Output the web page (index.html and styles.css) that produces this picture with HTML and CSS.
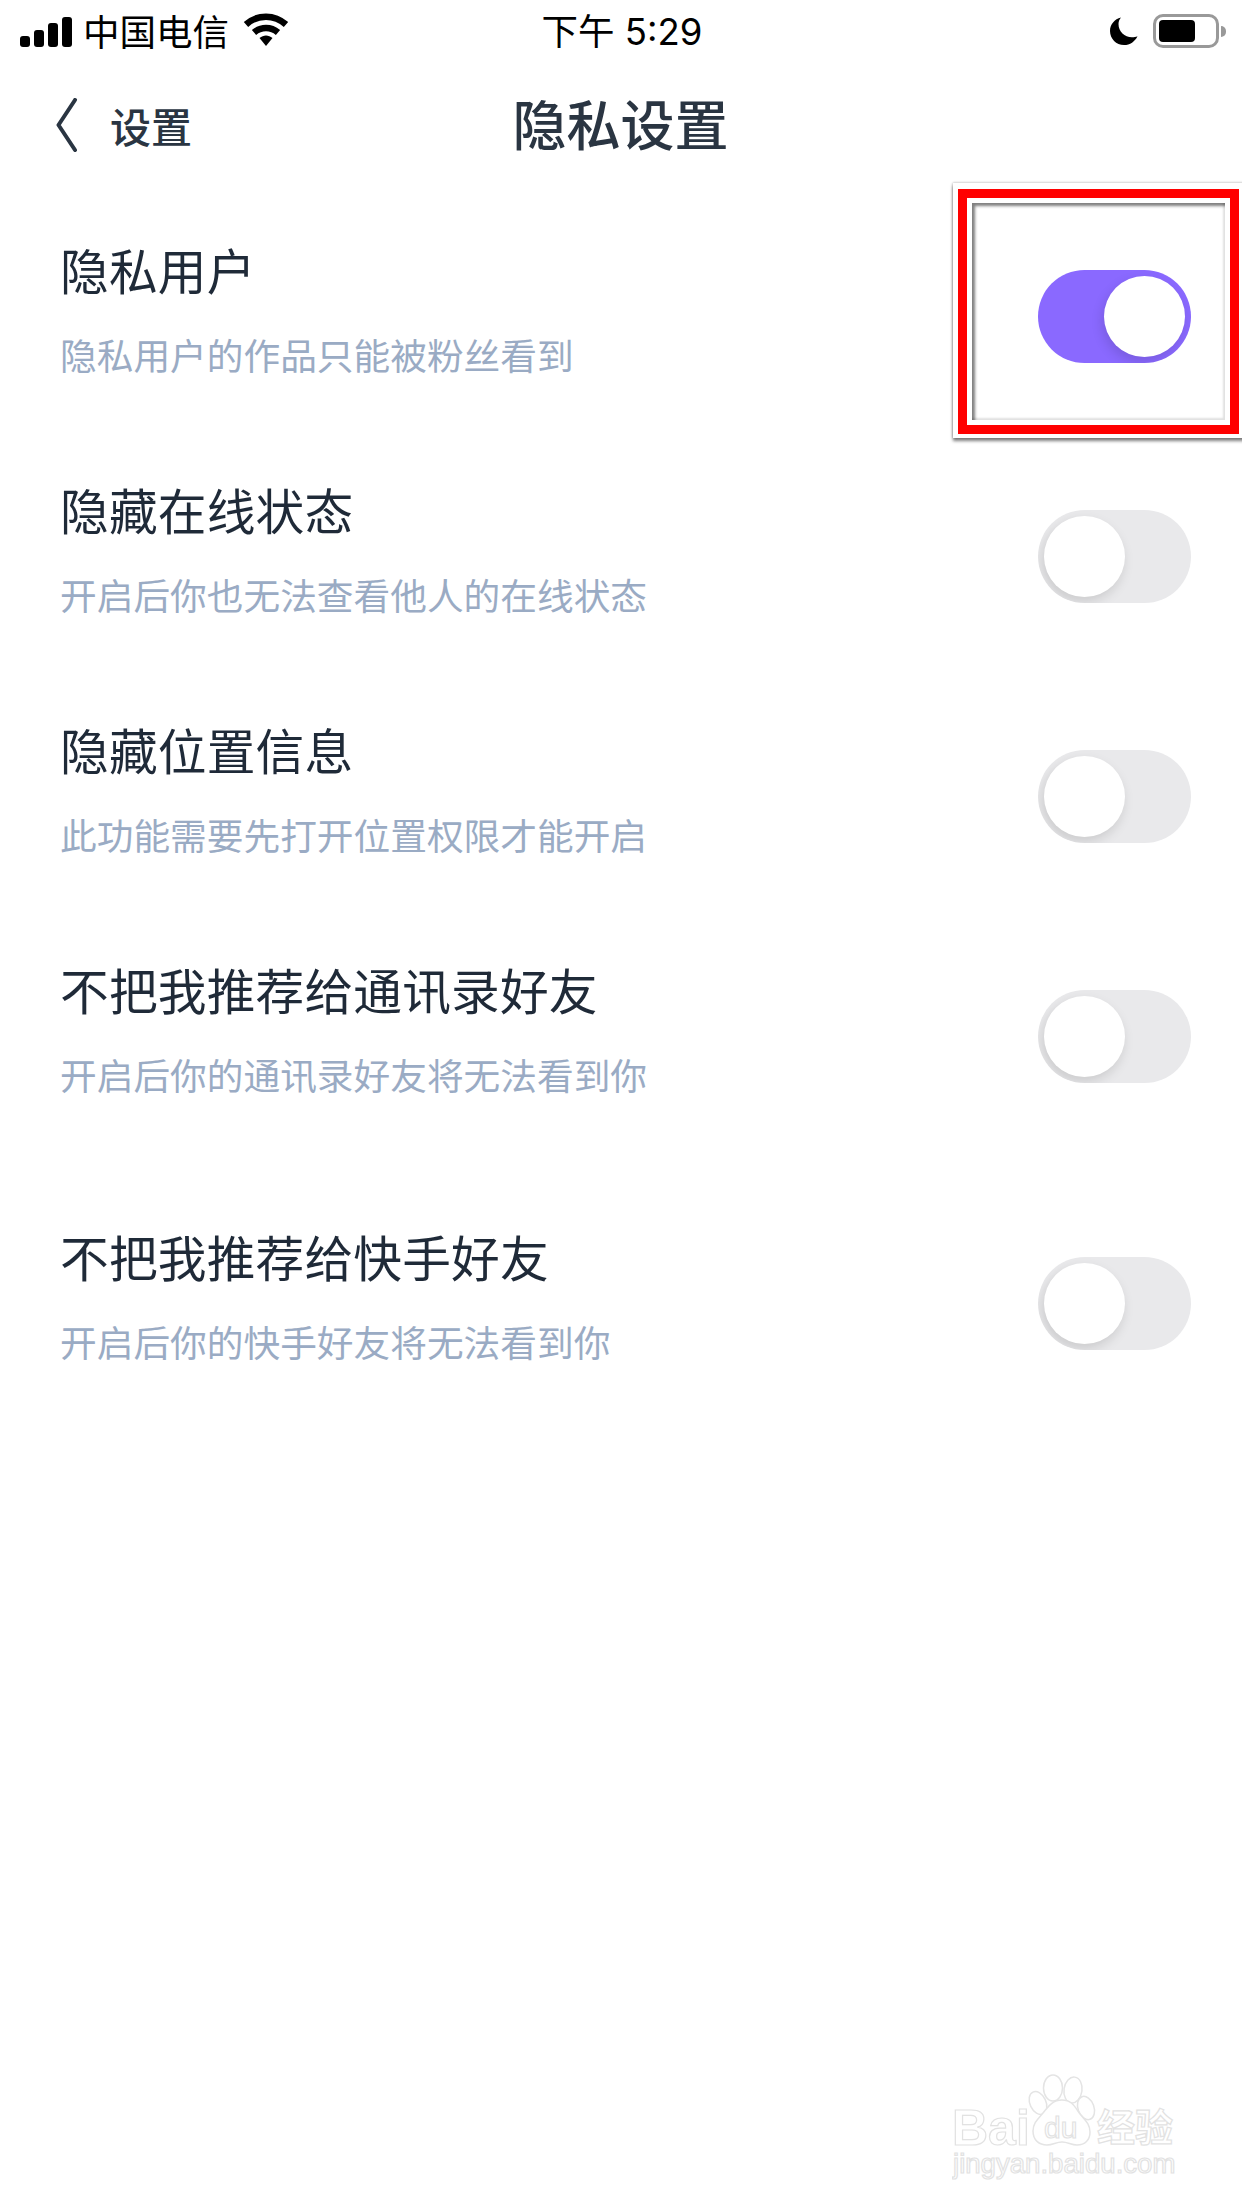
FILE: index.html
```html
<!DOCTYPE html>
<html lang="zh-CN">
<head>
<meta charset="utf-8">
<title>隐私设置</title>
<link rel="stylesheet" href="styles.css">
</head>
<body>
<div class="screen">
  <header class="status">
    <div class="status-left">
      <svg class="signal" width="52" height="30" viewBox="0 0 52 30"><rect x="0" y="19" width="10" height="11" rx="3"/><rect x="14" y="13" width="10" height="17" rx="3"/><rect x="28" y="6" width="10" height="24" rx="3"/><rect x="42" y="0" width="10" height="30" rx="3"/></svg>
      <span class="carrier">中国电信</span>
      <svg class="wifi" width="46" height="34" viewBox="0 0 46 34"><path d="M3 11.500C14.500 1 31.500 1 43 11.500" fill="none" stroke="#000" stroke-width="6.500"/><path d="M11 19.500C18 13.500 28 13.500 35 19.500" fill="none" stroke="#000" stroke-width="6.500"/><path d="M16.500 25C20.500 21.500 25.500 21.500 29.500 25L23 33Z"/></svg>
    </div>
    <div class="status-time">下午 5:29</div>
    <div class="status-right">
      <svg class="moon" width="28" height="28" viewBox="0 0 28 28"><path d="M11 0.500C4.500 2 0 7.500 0 14c0 7.800 6.200 14 14 14 6 0 11-3.500 13.500-8.800C25.800 20 24 20.300 22 20.300 14.500 20.300 8.500 14.300 8.500 7c0-2.300.9-4.600 2.500-6.500Z"/></svg>
      <div class="battery"><div class="battery-fill"></div></div>
      <div class="battery-nub"></div>
    </div>
  </header>

  <nav class="nav">
    <div class="nav-back">
      <svg class="chevron" width="24" height="54" viewBox="0 0 24 54"><path d="M20 2L3.500 27 20 52" fill="none" stroke="#2a3542" stroke-width="4" stroke-linecap="round" stroke-linejoin="round"/></svg>
      <span class="nav-back-label">设置</span>
    </div>
    <h1 class="nav-title">隐私设置</h1>
  </nav>

  <ul class="list">
    <li class="row">
      <div class="row-text"><div class="row-title">隐私用户</div><div class="row-sub">隐私用户的作品只能被粉丝看到</div></div>
      <div class="toggle toggle-on"><div class="knob"></div></div>
    </li>
    <li class="row">
      <div class="row-text"><div class="row-title">隐藏在线状态</div><div class="row-sub">开启后你也无法查看他人的在线状态</div></div>
      <div class="toggle"><div class="knob"></div></div>
    </li>
    <li class="row">
      <div class="row-text"><div class="row-title">隐藏位置信息</div><div class="row-sub">此功能需要先打开位置权限才能开启</div></div>
      <div class="toggle"><div class="knob"></div></div>
    </li>
    <li class="row">
      <div class="row-text"><div class="row-title">不把我推荐给通讯录好友</div><div class="row-sub">开启后你的通讯录好友将无法看到你</div></div>
      <div class="toggle"><div class="knob"></div></div>
    </li>
    <li class="row row-last">
      <div class="row-text"><div class="row-title">不把我推荐给快手好友</div><div class="row-sub">开启后你的快手好友将无法看到你</div></div>
      <div class="toggle"><div class="knob"></div></div>
    </li>
  </ul>

  <div class="annotation"><div class="annotation-red"><div class="annotation-inner"></div></div></div>

  <svg class="watermark" width="240" height="110" viewBox="0 0 240 110">
    <g class="wm-shape">
      <ellipse cx="101" cy="14" rx="9.500" ry="13"/>
      <ellipse cx="121" cy="16" rx="9" ry="13" transform="rotate(8 121 16)"/>
      <ellipse cx="86" cy="29" rx="8" ry="12" transform="rotate(-25 86 29)"/>
      <ellipse cx="134" cy="34" rx="8" ry="12" transform="rotate(-20 134 34)"/>
      <path d="M110 26c-10 0-14 7-19 13-5 6-10 10-10 18 0 9 6 14 14 14 6 0 9-3 15-3s9 3 15 3c8 0 13-5 13-13 0-8-5-12-10-18-5-7-8-14-18-14Z"/>
    </g>
    <text class="wm-big" x="0" y="71">Bai</text>
    <text class="wm-du" x="92" y="64">du</text>
    <text class="wm-cn" x="145" y="67">经验</text>
    <text class="wm-url" x="1" y="99">jingyan.baidu.com</text>
  </svg>
</div>
</body>
</html>
```
FILE: styles.css
```css
* { box-sizing: border-box; }
html, body { margin: 0; padding: 0; background: #fff; }
body { font-family: "Noto Sans CJK SC", "Noto Sans", sans-serif; }
.screen { position: relative; width: 1242px; height: 2208px; overflow: hidden; background: #fff; }

.status { height: 60px; display: grid; grid-template-columns: 1fr auto 1fr; align-items: center; padding: 0 16px 0 20px; color: #000; }
.status-left { display: flex; align-items: center; }
.signal { margin-top: 2px; }
.carrier { font-size: 36.500px; line-height: 60px; margin-left: 11px; }
.wifi { margin-left: 14px; margin-top: -2px; }
.status-time { font-family: "Inter", "Noto Sans CJK SC", sans-serif; font-size: 36.500px; line-height: 60px; padding-top: 2px; margin-left: -2px; }
.status-right { display: flex; align-items: center; justify-content: flex-end; }
.moon { margin-right: 15px; }
.battery { width: 66px; height: 34px; border: 3px solid #999; border-radius: 10px; padding: 3px; }
.battery-fill { width: 36px; height: 22px; background: #000; border-radius: 4px; }
.battery-nub { width: 5px; height: 11px; background: #999; border-radius: 0 5px 5px 0; margin-left: 2px; }

.nav { height: 137px; padding-bottom: 11px; display: grid; grid-template-columns: 1fr auto 1fr; align-items: center; padding-left: 55px; }
.nav-back { display: flex; align-items: center; }
.chevron { flex: none; margin-top: 3px; }
.nav-back-label { font-size: 41px; font-weight: 500; color: #2a3542; margin-left: 31px; line-height: 60px; margin-top: 4px; }
.nav-title { margin: 0; font-size: 54px; font-weight: 500; color: #2a3542; line-height: 70px; transform: translateX(-28px); }

.list { list-style: none; margin: 0; padding: 0 51px 0 60px; }
.row { height: 240px; display: flex; justify-content: space-between; align-items: flex-start; padding-top: 73px; }
.row-last { margin-top: 27px; }
.row-text { margin-top: -28px; }
.row-title { font-size: 48.700px; line-height: 54px; color: #1f2a38; letter-spacing: 0.2px; }
.row-sub { font-size: 36.700px; line-height: 44px; color: #9aabc4; margin-top: 36px; }

.toggle { position: relative; width: 153px; height: 93px; border-radius: 47px; background: #e9e9eb; overflow: hidden; flex: none; }
.knob { position: absolute; left: 6px; top: 6px; width: 81px; height: 81px; border-radius: 50%; background: #fff; box-shadow: -2px 5px 12px rgba(0, 0, 0, 0.13); }
.toggle-on { background: #8a69ff; }
.toggle-on .knob { left: 66px; }

.annotation { position: absolute; left: 953px; top: 183px; width: 300px; height: 255px; padding: 6px 0 4px 5px; box-shadow: 0 3px 3px rgba(0, 0, 0, 0.5), -1px 0 2px rgba(0, 0, 0, 0.12), 0 -1px 2px rgba(0, 0, 0, 0.12); }
.annotation-red { width: 281px; height: 245px; border: 9px solid #f00; padding: 5px; }
.annotation-inner { width: 253px; height: 217px; box-shadow: inset 3px 3px 3px rgba(0, 0, 0, 0.5), inset -2px -2px 2px rgba(0, 0, 0, 0.12); }

.watermark { position: absolute; left: 952px; top: 2074px; }
.wm-shape { fill: #fff; stroke: #e4e4e4; stroke-width: 1.500; }
.watermark text { fill: #fff; stroke: #e2e2e2; stroke-width: 1.200; }
.wm-big { font-family: "Liberation Sans", sans-serif; font-size: 50px; font-weight: 700; }
.wm-du { font-family: "Liberation Sans", sans-serif; font-size: 30px; }
.wm-cn { font-family: "Noto Sans CJK SC", sans-serif; font-size: 38px; font-weight: 700; }
.wm-url { font-family: "Liberation Sans", sans-serif; font-size: 27.600px; }
```
